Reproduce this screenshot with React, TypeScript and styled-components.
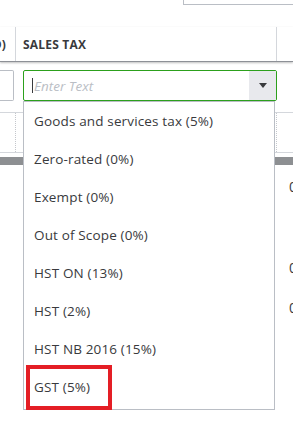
import React from "react";
import styled, { createGlobalStyle } from "styled-components";

const GlobalStyle = createGlobalStyle`
  html, body {
    margin: 0;
    padding: 0;
    background: #ffffff;
  }
  body {
    font-family: "Open Sans", "Liberation Sans", sans-serif;
    color: #393a3d;
    overflow: hidden;
  }
`;

const Page = styled.div`
  width: 293px;
  height: 440px;
  overflow: hidden;
  display: flex;
  flex-direction: column;
`;

const TopStrip = styled.div`
  height: 27px;
  display: flex;
  align-items: flex-start;
`;

const TopBox = styled.div`
  margin-left: 183px;
  flex: 1;
  height: 4px;
  border-left: 1px solid #babec5;
  border-bottom: 1px solid #babec5;
`;

const Row = styled.div<{ $h: number; $line?: string }>`
  display: grid;
  grid-template-columns: 16px 261px 1fr;
  height: ${(p) => p.$h}px;
  border-bottom: ${(p) => p.$line || "none"};
  box-sizing: border-box;
`;

const HeaderRow = styled(Row)`
  box-shadow: 0 1px 2px rgba(0, 0, 0, 0.25);
  position: relative;
  z-index: 1;
`;

const HeadCell = styled.div<{ $divider?: boolean }>`
  display: flex;
  align-items: center;
  overflow: hidden;
  white-space: nowrap;
  border-right: ${(p) => (p.$divider ? "1px solid #d4d7dc" : "none")};
  font-size: 12px;
  font-weight: 700;
  letter-spacing: 0.2px;
  color: #393a3d;
`;

const ClippedHead = styled(HeadCell)`
  justify-content: flex-end;
  padding-right: 9px;
`;

const TaxHead = styled(HeadCell)`
  padding-left: 7px;
`;

const Cell = styled.div<{ $dotted?: boolean }>`
  position: relative;
  border-right: ${(p) => (p.$dotted ? "1px dotted #c4c7cc" : "none")};
`;

const InputCell = styled.div`
  position: relative;
  padding: 8px 0 0 7px;
`;

const LeftInput = styled.div`
  margin-top: 8px;
  width: 14px;
  height: 31px;
  box-sizing: border-box;
  border: 1px solid #babec5;
  border-left: none;
  border-radius: 0 2px 2px 0;
`;

const Combo = styled.div`
  display: flex;
  width: 254px;
  height: 31px;
  box-sizing: border-box;
  border: 1px solid #2ca01c;
  border-radius: 2px;
`;

const Placeholder = styled.div`
  flex: 1;
  display: flex;
  align-items: center;
  padding-left: 8px;
  font-size: 13.5px;
  font-style: italic;
  color: #babec5;
`;

const Caret = styled.span`
  width: 1px;
  height: 15px;
  background: #393a3d;
  margin-right: 1px;
`;

const ArrowButton = styled.div`
  width: 27px;
  background: #e8e9ed;
  display: flex;
  align-items: center;
  justify-content: center;
`;

const Menu = styled.ul`
  position: absolute;
  left: 7px;
  top: 39px;
  width: 252px;
  margin: 0;
  padding: 0 0 3px;
  list-style: none;
  box-sizing: border-box;
  background: #ffffff;
  border: 1px solid #babec5;
  z-index: 5;
`;

const Item = styled.li`
  position: relative;
  height: 38px;
  display: flex;
  align-items: center;
  padding-left: 10px;
  font-size: 13.5px;
  letter-spacing: 0.15px;
  color: #393a3d;
  white-space: nowrap;
`;

const Highlight = styled.span`
  position: absolute;
  left: 2px;
  top: -3px;
  width: 86px;
  height: 45px;
  box-sizing: border-box;
  border: 4px solid #e41e25;
`;

const Band = styled.div`
  margin-top: 4px;
  height: 8px;
  background: #8d8f92;
`;

const Amount = styled.div`
  display: flex;
  align-items: center;
  padding-left: 12px;
  font-size: 14px;
  color: #393a3d;
  white-space: nowrap;
  overflow: hidden;
`;

const options = [
  "Goods and services tax (5%)",
  "Zero-rated (0%)",
  "Exempt (0%)",
  "Out of Scope (0%)",
  "HST ON (13%)",
  "HST (2%)",
  "HST NB 2016 (15%)",
  "GST (5%)",
];

const amountRows = [
  { h: 42, value: "0.00" },
  { h: 40, value: "" },
  { h: 40, value: "0.00" },
  { h: 40, value: "0.00" },
];

export default function App() {
  return (
    <Page>
      <GlobalStyle />
      <TopStrip>
        <TopBox />
      </TopStrip>

      <HeaderRow $h={35} $line="1px solid #8d9096">
        <ClippedHead $divider>AMOUNT (CAD)</ClippedHead>
        <TaxHead $divider>SALES TAX</TaxHead>
        <HeadCell />
      </HeaderRow>

      <Row $h={51} $line="1px solid #d4d7dc">
        <Cell>
          <LeftInput />
        </Cell>
        <InputCell>
          <Combo>
            <Placeholder>
              <Caret />
              Enter Text
            </Placeholder>
            <ArrowButton>
              <svg width="8" height="5" viewBox="0 0 8 5">
                <path d="M0 0h8L4 5z" fill="#393a3d" />
              </svg>
            </ArrowButton>
          </Combo>
          <Menu>
            {options.map((o, i) => (
              <Item key={o}>
                {o}
                {i === options.length - 1 && <Highlight />}
              </Item>
            ))}
          </Menu>
        </InputCell>
        <Cell />
      </Row>

      <Row $h={40} $line="1px solid #d4d7dc">
        <Cell $dotted />
        <Cell $dotted />
        <Cell />
      </Row>

      <Band />

      {amountRows.map((r, i) => (
        <Row key={i} $h={r.h}>
          <Cell />
          <Cell />
          <Amount>{r.value}</Amount>
        </Row>
      ))}
    </Page>
  );
}
